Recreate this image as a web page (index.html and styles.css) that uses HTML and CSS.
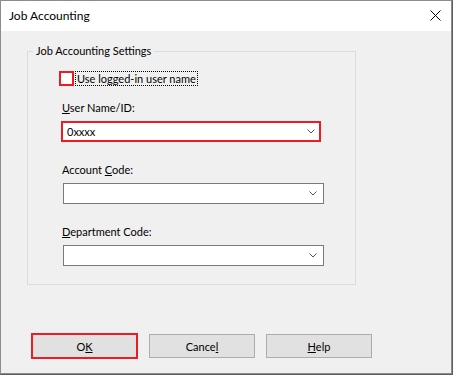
FILE: index.html
```html
<!DOCTYPE html>
<html lang="en">
<head>
    <meta charset="UTF-8">
    <meta name="viewport" content="width=device-width, initial-scale=1.0">
    <title>Job Accounting</title>
    <link rel="stylesheet" href="styles.css">
</head>
<body>
    <div class="window">
        <div class="titlebar">
            <span class="title">Job Accounting</span>
            <svg class="close" width="11" height="11" viewBox="0 0 11 11">
                <path d="M0.5 0.5 L10.5 10.5 M10.5 0.5 L0.5 10.5" stroke="#000" stroke-width="1" fill="none"/>
            </svg>
        </div>

        <div class="content">
            <fieldset class="group">
                <legend>Job Accounting Settings</legend>

                <label class="check-row">
                    <span class="checkbox"></span>
                    <span class="check-label">Use logged-in user name</span>
                </label>

                <div class="field-label first"><u>U</u>ser Name/ID:</div>
                <div class="combo highlight">
                    <span class="combo-value">0xxxx</span>
                    <svg class="chevron" width="8" height="5" viewBox="0 0 8 5">
                        <path d="M0.5 0.5 L4 4 L7.5 0.5" stroke="#555" stroke-width="1" fill="none"/>
                    </svg>
                </div>

                <div class="field-label">Account <u>C</u>ode:</div>
                <div class="combo">
                    <span class="combo-value"></span>
                    <svg class="chevron" width="8" height="5" viewBox="0 0 8 5">
                        <path d="M0.5 0.5 L4 4 L7.5 0.5" stroke="#555" stroke-width="1" fill="none"/>
                    </svg>
                </div>

                <div class="field-label"><u>D</u>epartment Code:</div>
                <div class="combo">
                    <span class="combo-value"></span>
                    <svg class="chevron" width="8" height="5" viewBox="0 0 8 5">
                        <path d="M0.5 0.5 L4 4 L7.5 0.5" stroke="#555" stroke-width="1" fill="none"/>
                    </svg>
                </div>
            </fieldset>

            <div class="buttons">
                <button class="btn highlight">O<u>K</u></button>
                <button class="btn">Cance<u>l</u></button>
                <button class="btn"><u>H</u>elp</button>
            </div>
        </div>
    </div>
</body>
</html>
```

FILE: styles.css
```css
body {
    margin: 0;
    background: #5e5e5e;
    font-family: "Segoe UI", Lato, "Noto Sans", sans-serif;
    font-size: 11px;
    color: #000;
}

.window {
    box-sizing: border-box;
    width: 452px;
    height: 374px;
    border: 1px solid #8c8c8c;
    background: #f0f0f0;
    display: flex;
    flex-direction: column;
}

.titlebar {
    height: 30px;
    background: #fff;
    display: flex;
    align-items: center;
    justify-content: space-between;
    padding: 0 10px 0 8px;
}

.title {
    font-size: 12px;
    margin-top: -1px;
}

.close {
    margin-top: -2px;
}

.content {
    padding: 13px 0 0 26px;
}

.group {
    box-sizing: border-box;
    width: 329px;
    height: 241px;
    margin: 0;
    padding: 0;
    border: 1px solid #dcdcdc;
    display: flex;
    flex-direction: column;
}

.group legend {
    margin-left: 5px;
    padding: 0 3px;
    line-height: 14px;
}

.check-row {
    display: flex;
    align-items: center;
    margin: 13px 0 0 31px;
    height: 15px;
}

.checkbox {
    box-sizing: border-box;
    width: 15px;
    height: 15px;
    border: 2px solid #ed1c24;
    background: #fff;
}

.check-label {
    box-sizing: border-box;
    height: 15px;
    line-height: 13px;
    margin-left: 1px;
    padding: 0 1px;
    border: 1px dotted #000;
}

.field-label {
    margin: 20px 0 0 34px;
    line-height: 15px;
}

.field-label.first {
    margin-top: 14px;
}

.combo {
    box-sizing: border-box;
    width: 261px;
    height: 21px;
    margin: 6px 0 0 35px;
    border: 1px solid #7a7a7a;
    background: #fff;
    display: flex;
    align-items: center;
    justify-content: space-between;
    padding: 0 6px 0 4px;
}

.combo.highlight {
    width: 260px;
    margin-left: 33px;
    border: 2px solid #ed1c24;
    padding-right: 4px;
}

.buttons {
    display: flex;
    align-items: center;
    gap: 11px;
    margin: 48px 0 0 4px;
}

.btn {
    box-sizing: border-box;
    width: 106px;
    height: 24px;
    padding: 0;
    border: 1px solid #adadad;
    background: #e1e1e1;
    font-family: inherit;
    font-size: 11px;
    color: #000;
}

.btn.highlight {
    width: 107px;
    height: 26px;
    border: 2px solid #ed1c24;
}
```
